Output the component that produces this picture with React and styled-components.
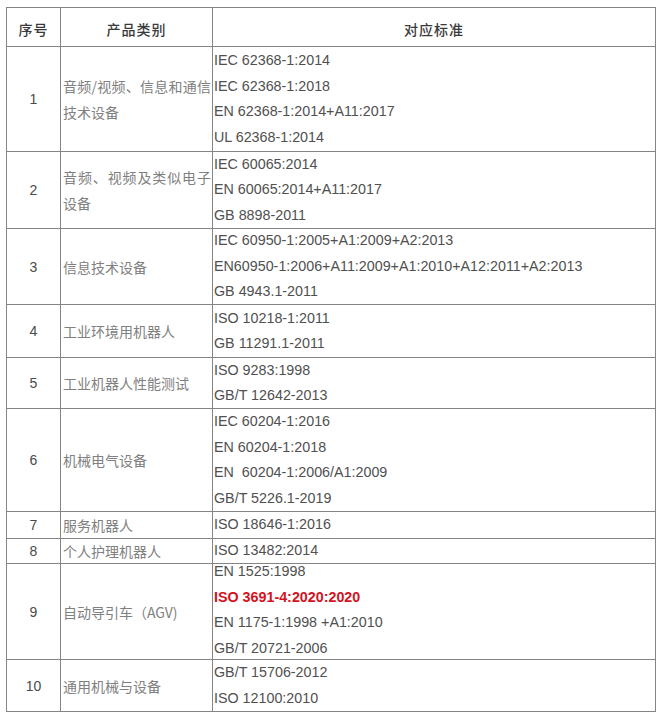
import React from "react";
import styled, { createGlobalStyle } from "styled-components";

const GlobalStyle = createGlobalStyle`
  html, body {
    margin: 0;
    padding: 0;
    background: #ffffff;
  }
`;

const Page = styled.div`
  padding: 7px 4px 0 6px;
  box-sizing: border-box;
  width: 660px;
`;

const Table = styled.div`
  width: 650px;
  border-top: 1px solid #858585;
  border-left: 1px solid #858585;
  box-sizing: border-box;
`;

const Row = styled.div`
  display: grid;
  grid-template-columns: 54px 152px 1fr;
  grid-template-rows: minmax(0, 1fr);
  height: ${(props) => props.h}px;
`;

const Cell = styled.div`
  border-right: 1px solid #858585;
  border-bottom: 1px solid #858585;
  box-sizing: border-box;
  display: flex;
  flex-direction: column;
  justify-content: center;
  min-width: 0;
  min-height: 0;
`;

const HeadCell = styled(Cell)`
  align-items: center;
  padding-top: 4px;
  font-family: "Noto Sans CJK SC", serif;
  font-weight: 500;
  font-size: 14px;
  color: #3a3a3a;
  letter-spacing: 1px;
`;

const NumCell = styled(Cell)`
  align-items: center;
  font-family: "Liberation Sans", Arial, sans-serif;
  font-size: 14px;
  color: #4a4a4a;
`;

const CategoryCell = styled(Cell)`
  padding: 0 1px 0 2px;
  font-family: "Noto Sans CJK SC", sans-serif;
  font-size: 14px;
  line-height: 26px;
  color: #808080;
  text-align: justify;
  overflow: visible;
`;

const StandardCell = styled(Cell)`
  padding-left: 1px;
  padding-bottom: ${(props) => props.$lift || 0}px;
  overflow: visible;
`;

const Std = styled.div`
  font-family: "Liberation Sans", Arial, sans-serif;
  font-size: 14.3px;
  line-height: 25.5px;
  white-space: nowrap;
  flex-shrink: 0;
  color: ${(props) => (props.$hot ? "#d4121e" : "#505050")};
  font-weight: ${(props) => (props.$hot ? 700 : 400)};
`;

const rows = [
  {
    no: "1",
    name: "音频/视频、信息和通信技术设备",
    h: 105,
    stds: [
      "IEC 62368-1:2014",
      "IEC 62368-1:2018",
      "EN 62368-1:2014+A11:2017",
      "UL 62368-1:2014",
    ],
  },
  {
    no: "2",
    name: "音频、视频及类似电子设备",
    h: 77,
    stds: ["IEC 60065:2014", "EN 60065:2014+A11:2017", "GB 8898-2011"],
  },
  {
    no: "3",
    name: "信息技术设备",
    h: 76,
    stds: [
      "IEC 60950-1:2005+A1:2009+A2:2013",
      "EN60950-1:2006+A11:2009+A1:2010+A12:2011+A2:2013",
      "GB 4943.1-2011",
    ],
  },
  {
    no: "4",
    name: "工业环境用机器人",
    h: 53,
    stds: ["ISO 10218-1:2011", "GB 11291.1-2011"],
  },
  {
    no: "5",
    name: "工业机器人性能测试",
    h: 51,
    stds: ["ISO 9283:1998", "GB/T 12642-2013"],
  },
  {
    no: "6",
    name: "机械电气设备",
    h: 103,
    stds: [
      "IEC 60204-1:2016",
      "EN 60204-1:2018",
      "EN\u00a0\u00a060204-1:2006/A1:2009",
      "GB/T 5226.1-2019",
    ],
  },
  { no: "7", name: "服务机器人", h: 27, stds: ["ISO 18646-1:2016"] },
  { no: "8", name: "个人护理机器人", h: 25, stds: ["ISO 13482:2014"] },
  {
    no: "9",
    name: "自动导引车（AGV)",
    h: 96,
    lift: 3,
    stds: [
      "EN 1525:1998",
      { text: "ISO 3691-4:2020:2020", hot: true },
      "EN 1175-1:1998 +A1:2010",
      "GB/T 20721-2006",
    ],
  },
  {
    no: "10",
    name: "通用机械与设备",
    h: 52,
    stds: ["GB/T 15706-2012", "ISO 12100:2010"],
  },
];

const App = () => {
  return (
    <Page>
      <GlobalStyle />
      <Table>
        <Row h={39}>
          <HeadCell>序号</HeadCell>
          <HeadCell>产品类别</HeadCell>
          <HeadCell>对应标准</HeadCell>
        </Row>
        {rows.map((row) => (
          <Row key={row.no} h={row.h}>
            <NumCell>{row.no}</NumCell>
            <CategoryCell>
              <div>{row.name}</div>
            </CategoryCell>
            <StandardCell $lift={row.lift}>
              {row.stds.map((s, i) =>
                typeof s === "string" ? (
                  <Std key={i}>{s}</Std>
                ) : (
                  <Std key={i} $hot={s.hot}>
                    {s.text}
                  </Std>
                )
              )}
            </StandardCell>
          </Row>
        ))}
      </Table>
    </Page>
  );
};

export default App;
